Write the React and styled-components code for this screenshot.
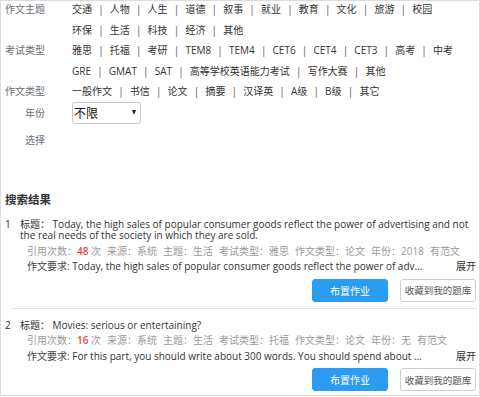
import React from "react";
import styled, { createGlobalStyle } from "styled-components";

const GlobalStyle = createGlobalStyle`
  html, body { margin: 0; padding: 0; background: #fff; }
  body { font-family: "Open Sans", "Noto Sans CJK SC", sans-serif; font-size: 10px; color: #333; }
  * { box-sizing: border-box; }
`;

const Page = styled.div`
  width: 480px;
  border: 1px solid #dcdcdc;
  background: #fff;
`;

const Filters = styled.div`
  margin-top: -2px;
`;

const FilterRow = styled.div`
  display: flex;
  align-items: ${(p) => (p.$center ? "center" : "flex-start")};
  margin-top: ${(p) => p.$mt || 0}px;
`;

const FilterLabel = styled.div`
  width: 44px;
  flex-shrink: 0;
  text-align: right;
  color: #6a6f78;
  line-height: 20.5px;
  white-space: nowrap;
`;

const FilterLines = styled.div`
  margin-left: 27px;
  display: flex;
  flex-direction: column;
`;

const FilterLine = styled.div`
  display: flex;
  line-height: 20.5px;
  white-space: nowrap;
`;

const Option = styled.span`
  color: #333;
  cursor: pointer;
`;

const Sep = styled.span`
  display: inline-block;
  width: 17.8px;
  text-align: center;
  color: #555;
`;

const SelectWrap = styled.div`
  position: relative;
  margin-left: 27px;
  width: 69px;
  height: 22px;
`;

const Select = styled.select`
  appearance: none;
  -webkit-appearance: none;
  width: 69px;
  height: 22px;
  border: 1px solid #c8c8c8;
  border-radius: 3px;
  background: #fff;
  padding: 0 0 0 1px;
  font-family: "Open Sans", "Noto Sans CJK SC", sans-serif;
  font-size: 12px;
  color: #111;
  outline: none;
`;

const Arrow = styled.span`
  position: absolute;
  right: 5px;
  top: 8px;
  width: 0;
  height: 0;
  border-left: 2.5px solid transparent;
  border-right: 2.5px solid transparent;
  border-top: 5px solid #222;
  pointer-events: none;
`;

const Heading = styled.div`
  margin-top: 41.5px;
  padding-left: 4px;
  font-size: 11.5px;
  font-weight: bold;
  line-height: 16px;
  color: #333;
`;

const Item = styled.div`
  padding: 11px 3px 6px 4px;
  &:last-child { padding-bottom: 4px; }
`;

const TitleRow = styled.div`
  display: flex;
  line-height: 11px;
`;

const Num = styled.div`
  width: 15px;
  flex-shrink: 0;
  color: #333;
`;

const Title = styled.div`
  flex: 1;
  color: #333;
`;

const Meta = styled.div`
  margin: 2.5px 0 0 22px;
  line-height: 14px;
  color: #9a9a9a;
  white-space: nowrap;
  display: flex;
`;

const MetaItem = styled.span`
  margin-right: 6px;
`;

const Red = styled.span`
  color: #e9483f;
  font-weight: 600;
`;

const Req = styled.div`
  margin: 1.5px 0 0 22px;
  line-height: 14px;
  display: flex;
  align-items: center;
`;

const ReqText = styled.div`
  width: 400px;
  white-space: nowrap;
  overflow: hidden;
  text-overflow: ellipsis;
  color: #333;
`;

const ReqLabel = styled.span`
  color: #444;
`;

const Expand = styled.span`
  margin-left: auto;
  color: #333;
  cursor: pointer;
`;

const Actions = styled.div`
  display: flex;
  justify-content: flex-end;
  gap: 12px;
  margin-top: 5.5px;
`;

const Button = styled.button`
  width: 76px;
  height: 23px;
  padding: 0;
  border-radius: 3px;
  font-family: "Open Sans", "Noto Sans CJK SC", sans-serif;
  font-size: ${(p) => (p.$primary ? "10px" : "9.5px")};
  border: 1px solid ${(p) => (p.$primary ? "#2b9cf2" : "#cfcfcf")};
  background: ${(p) => (p.$primary ? "#2b9cf2" : "#fff")};
  color: ${(p) => (p.$primary ? "#fff" : "#555")};
  cursor: pointer;
`;

const Divider = styled.div`
  margin: 0 3px 0 10px;
  border-top: 1px solid #e6e6e6;
`;

const groups = [
  {
    label: "作文主题",
    lines: [
      ["交通", "人物", "人生", "道德", "叙事", "就业", "教育", "文化", "旅游", "校园"],
      ["环保", "生活", "科技", "经济", "其他"],
    ],
  },
  {
    label: "考试类型",
    lines: [
      ["雅思", "托福", "考研", "TEM8", "TEM4", "CET6", "CET4", "CET3", "高考", "中考"],
      ["GRE", "GMAT", "SAT", "高等学校英语能力考试", "写作大赛", "其他"],
    ],
  },
  {
    label: "作文类型",
    lines: [["一般作文", "书信", "论文", "摘要", "汉译英", "A级", "B级", "其它"]],
  },
];

const results = [
  {
    n: 1,
    title:
      "Today, the high sales of popular consumer goods reflect the power of advertising and not the real needs of the society in which they are sold.",
    count: 48,
    source: "系统",
    topic: "生活",
    exam: "雅思",
    type: "论文",
    year: "2018",
    req: "Today, the high sales of popular consumer goods reflect the power of advertising and not the real needs of the society in which they are sold.",
  },
  {
    n: 2,
    title: "Movies: serious or entertaining?",
    count: 16,
    source: "系统",
    topic: "生活",
    exam: "托福",
    type: "论文",
    year: "无",
    req: "For this part, you should write about 300 words. You should spend about 30 minutes on this task.",
  },
];

function Result({ r }) {
  return (
    <Item>
      <TitleRow>
        <Num>{r.n}</Num>
        <Title>标题： {r.title}</Title>
      </TitleRow>
      <Meta>
        <MetaItem>
          引用次数：<Red>{r.count}</Red> 次
        </MetaItem>
        <MetaItem>来源：{r.source}</MetaItem>
        <MetaItem>主题：{r.topic}</MetaItem>
        <MetaItem>考试类型：{r.exam}</MetaItem>
        <MetaItem>作文类型：{r.type}</MetaItem>
        <MetaItem>年份：{r.year}</MetaItem>
        <MetaItem>有范文</MetaItem>
      </Meta>
      <Req>
        <ReqText>
          <ReqLabel>作文要求: </ReqLabel>
          {r.req}
        </ReqText>
        <Expand>展开</Expand>
      </Req>
      <Actions>
        <Button $primary>布置作业</Button>
        <Button>收藏到我的题库</Button>
      </Actions>
    </Item>
  );
}

export default function App() {
  return (
    <>
      <GlobalStyle />
      <Page>
        <Filters>
          {groups.map((g) => (
            <FilterRow key={g.label}>
              <FilterLabel>{g.label}</FilterLabel>
              <FilterLines>
                {g.lines.map((line, i) => (
                  <FilterLine key={i}>
                    {line.map((o, j) => (
                      <React.Fragment key={o}>
                        {j > 0 && <Sep>|</Sep>}
                        <Option>{o}</Option>
                      </React.Fragment>
                    ))}
                  </FilterLine>
                ))}
              </FilterLines>
            </FilterRow>
          ))}
          <FilterRow $center $mt={0.5}>
            <FilterLabel>年份</FilterLabel>
            <SelectWrap>
              <Select defaultValue="不限">
                <option>不限</option>
                <option>2018</option>
                <option>2017</option>
              </Select>
              <Arrow />
            </SelectWrap>
          </FilterRow>
          <FilterRow $mt={6}>
            <FilterLabel>选择</FilterLabel>
          </FilterRow>
        </Filters>
        <Heading>搜索结果</Heading>
        {results.map((r, i) => (
          <React.Fragment key={r.n}>
            {i > 0 && <Divider />}
            <Result r={r} />
          </React.Fragment>
        ))}
      </Page>
    </>
  );
}
